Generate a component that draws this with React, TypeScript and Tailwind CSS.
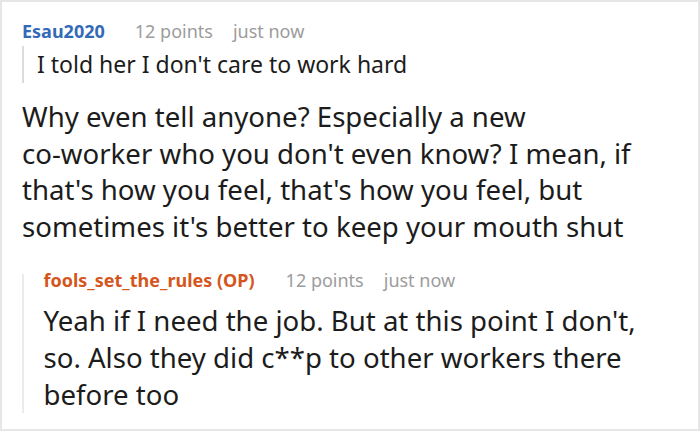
export default function App() {
  return (
    <div
      className="w-[700px] h-[431px] overflow-hidden bg-white border-2 border-[#e6e6e6] text-[#1c1c1c]"
      style={{ fontFamily: '"Noto Sans", "Open Sans", sans-serif' }}
    >
      <div className="pl-[20px] pt-[16.5px]">
        <div className="flex items-baseline text-[18px] leading-[24px]">
          <span className="font-bold text-[#336ab8]">Esau2020</span>
          <span className="ml-[30px] text-[#9c9c9c]">12 points</span>
          <span className="ml-[20px] text-[#9c9c9c]">just now</span>
        </div>
        <div className="mt-[3.5px] border-l-[2px] border-[#dcdcdc] pl-[13px] text-[23px] leading-[37px]">
          I told her I don't care to work hard
        </div>
        <p className="mt-[15px] text-[27.6px] leading-[36.7px]">
          Why even tell anyone? Especially a new
          <br />
          co-worker who you don't even know? I mean, if
          <br />
          that's how you feel, that's how you feel, but
          <br />
          sometimes it's better to keep your mouth shut
        </p>
        <div className="mt-[29px] border-l-[2px] border-[#ebebeb] pl-[19.5px]">
          <div className="flex items-baseline text-[18px] leading-[12px]">
            <span className="font-bold text-[#d4561d]">fools_set_the_rules (OP)</span>
            <span className="ml-[31px] text-[#9c9c9c]">12 points</span>
            <span className="ml-[20px] text-[#9c9c9c]">just now</span>
          </div>
          <p className="mt-[16.5px] text-[27.6px] leading-[37px]">
            Yeah if I need the job. But at this point I don't,
            <br />
            so. Also they did c**p to other workers there
            <br />
            before too
          </p>
        </div>
      </div>
    </div>
  )
}
